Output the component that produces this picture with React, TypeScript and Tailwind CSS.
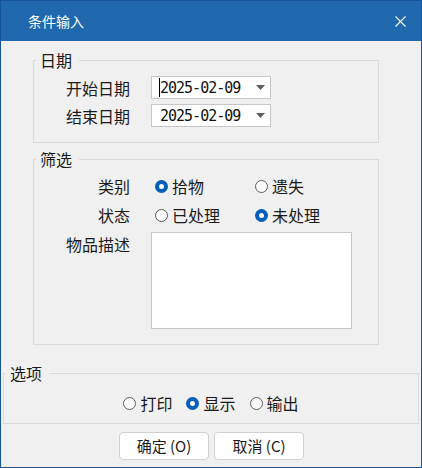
import type { ReactNode } from 'react';

function Radio({ checked, label }: { checked?: boolean; label: string }): JSX.Element {
  return (
    <span className="flex items-center gap-[4px]">
      {checked ? (
        <span className="flex h-[13px] w-[13px] items-center justify-center rounded-full bg-[#005fb8]">
          <span className="h-[5px] w-[5px] rounded-full bg-white" />
        </span>
      ) : (
        <span className="h-[13px] w-[13px] rounded-full border border-[#5d5d5d] bg-[#fbfbfb]" />
      )}
      <span className="text-[16px] leading-[20px]">{label}</span>
    </span>
  );
}

function DateBox({ caret }: { caret?: boolean }): JSX.Element {
  return (
    <div className="flex h-[23px] w-[120px] items-center border border-[#c6c6c6] bg-white pr-[5px]">
      {caret ? (
        <span className="ml-[7px] h-[19px] w-[1px] bg-black" />
      ) : (
        <span className="ml-[8px]" />
      )}
      <span className="font-['DejaVu_Sans_Mono',monospace] text-[15px] leading-[20px] tracking-[-1px] text-[#111]">
        2025-02-09
      </span>
      <svg className="ml-auto" width="9" height="5" viewBox="0 0 9 5">
        <path d="M0 0h9L4.5 5z" fill="#606060" />
      </svg>
    </div>
  );
}

function Group({
  title,
  className,
  children,
}: {
  title: string;
  className: string;
  children: ReactNode;
}): JSX.Element {
  return (
    <fieldset className={`border border-[#dadada] ${className}`}>
      <legend className="ml-[2px] pl-[4px] pr-[7px] text-[16px] leading-[18px]">{title}</legend>
      {children}
    </fieldset>
  );
}

export default function App(): JSX.Element {
  return (
    <div className="flex h-[468px] w-[422px] flex-col border border-[#17559a] bg-[#f0f0f0] font-['Noto_Sans_CJK_SC','Liberation_Sans',sans-serif] text-[#1a1a1a]">
      <div className="flex h-[40px] shrink-0 items-center justify-between bg-[#2068ae] pl-[27px] pr-[15px] text-white">
        <span className="text-[14px] leading-[18px]">条件输入</span>
        <svg width="11" height="11" viewBox="0 0 11 11">
          <path d="M0.5 0.5l10 10M10.5 0.5l-10 10" stroke="white" strokeWidth="1.1" />
        </svg>
      </div>

      <Group title="日期" className="ml-[32px] mt-[10px] w-[346px]">
        <div className="flex flex-col gap-[5px] pb-[15px] pl-[32px] pt-[7px]">
          <div className="flex items-center">
            <span className="w-[85px] text-[16px] leading-[20px]">开始日期</span>
            <DateBox caret />
          </div>
          <div className="flex items-center">
            <span className="w-[85px] text-[16px] leading-[20px]">结束日期</span>
            <DateBox />
          </div>
        </div>
      </Group>

      <Group title="筛选" className="ml-[32px] mt-[7px] w-[346px]">
        <div className="flex flex-col pb-[15px] pl-[32px] pt-[7px]">
          <div className="flex h-[22px] items-center">
            <span className="w-[64px] text-right text-[16px] leading-[20px]">类别</span>
            <div className="ml-[25px] flex">
              <div className="w-[100px]">
                <Radio checked label="拾物" />
              </div>
              <Radio label="遗失" />
            </div>
          </div>
          <div className="mt-[7px] flex h-[22px] items-center">
            <span className="w-[64px] text-right text-[16px] leading-[20px]">状态</span>
            <div className="ml-[25px] flex">
              <div className="w-[100px]">
                <Radio label="已处理" />
              </div>
              <Radio checked label="未处理" />
            </div>
          </div>
          <div className="mt-[6px] flex">
            <span className="w-[64px] pt-[2px] text-right text-[16px] leading-[20px]">物品描述</span>
            <div className="ml-[21px] h-[97px] w-[201px] border border-[#c6c6c6] bg-white" />
          </div>
        </div>
      </Group>

      <Group title="选项" className="ml-[2px] mt-[19px] w-[416px]">
        <div className="flex justify-center gap-[14px] pb-[10px] pt-[11px]">
          <Radio label="打印" />
          <Radio checked label="显示" />
          <Radio label="输出" />
        </div>
      </Group>

      <div className="mt-[8px] flex justify-center gap-[5px] pl-[1px]">
        <button
          type="button"
          className="h-[28px] w-[90px] rounded-[4px] border border-[#d0d0d0] bg-white text-[15px] leading-[18px]"
        >
          确定 (O)
        </button>
        <button
          type="button"
          className="h-[28px] w-[90px] rounded-[4px] border border-[#d0d0d0] bg-white text-[15px] leading-[18px]"
        >
          取消 (C)
        </button>
      </div>
    </div>
  );
}
